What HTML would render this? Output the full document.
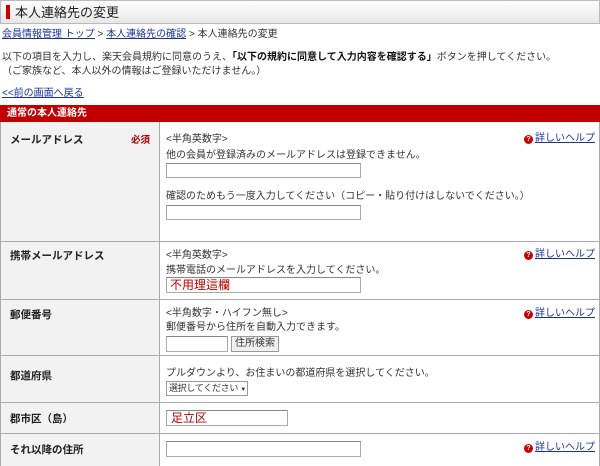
<!DOCTYPE html>
<html><head><meta charset="utf-8"><style>
*{margin:0;padding:0;box-sizing:border-box}
body{width:600px;height:466px;overflow:hidden;background:#fff;font-family:"Liberation Sans","Noto Sans CJK JP",sans-serif;font-size:10px;color:#333;position:relative}
.a{position:absolute;white-space:nowrap;line-height:12px}
a,.lk{color:#1a3399;text-decoration:underline}
.hdr{left:0;top:0;width:600px;height:24px;background:linear-gradient(#fdfdfd,#e8e8e8);border:1px solid #bbb}
.bar{left:6px;top:5px;width:4px;height:14px;background:#c00}
.red{left:0;top:105px;width:600px;height:17px;background:#bf0000;color:#fff;font-weight:bold;font-size:10px;padding:3px 0 0 7px}
.lc{left:0;width:160px;background:#f2f2f2;border-right:1px solid #aaa}
.hl{position:absolute;left:0;width:600px;height:1px;background:#aaa}
.lab{font-weight:bold;font-size:10.5px;color:#222}
.in{position:absolute;background:#fff;border:1px solid #aaa;border-top-color:#888}
.help{left:524px}
.q{display:inline-block;width:9px;height:9px;border-radius:50%;background:#c00;color:#fff;font-size:7px;font-weight:bold;text-align:center;line-height:9px;margin-right:2px;vertical-align:0px}
</style></head><body>
<div class="a hdr"></div><div class="a bar"></div>
<div class="a" style="left:15px;top:5px;font-size:13px;line-height:15px;color:#222">本人連絡先の変更</div>
<div class="a" style="left:2px;top:29px"><a>会員情報管理 トップ</a> &gt; <a>本人連絡先の確認</a> &gt; 本人連絡先の変更</div>
<div class="a" style="left:2px;top:52px">以下の項目を入力し、楽天会員規約に同意のうえ、<b style="color:#111">「以下の規約に同意して入力内容を確認する」</b>ボタンを押してください。</div>
<div class="a" style="left:2px;top:66px">（ご家族など、本人以外の情報はご登録いただけません。）</div>
<div class="a" style="left:2px;top:88px"><a>&lt;&lt;前の画面へ戻る</a></div>
<div class="a red" style="line-height:12px">通常の本人連絡先</div>
<div class="a lc" style="top:122px;height:344px"></div>
<div style="position:absolute;left:0;top:122px;width:600px;height:344px;border-left:1px solid #aaa;border-right:1px solid #aaa"></div>
<div class="hl" style="top:241px"></div><div class="hl" style="top:299px"></div><div class="hl" style="top:355px"></div><div class="hl" style="top:402px"></div><div class="hl" style="top:433px"></div>

<div class="a lab" style="left:10px;top:134px">メールアドレス</div>
<div class="a" style="left:131px;top:135px;color:#a00;font-weight:bold;font-size:9.5px">必須</div>
<div class="a" style="left:166px;top:134px">&lt;半角英数字&gt;</div>
<div class="a" style="left:166px;top:150px">他の会員が登録済みのメールアドレスは登録できません。</div>
<div class="in" style="left:166px;top:163px;width:195px;height:15px"></div>
<div class="a" style="left:166px;top:191px">確認のためもう一度入力してください（コピー・貼り付けはしないでください。）</div>
<div class="in" style="left:166px;top:205px;width:195px;height:15px"></div>
<div class="a help" style="top:133px"><span class="q">?</span><span class="lk">詳しいヘルプ</span></div>

<div class="a lab" style="left:10px;top:250px">携帯メールアドレス</div>
<div class="a" style="left:166px;top:250px">&lt;半角英数字&gt;</div>
<div class="a" style="left:166px;top:265px">携帯電話のメールアドレスを入力してください。</div>
<div class="in" style="left:166px;top:277px;width:195px;height:16px"></div>
<div class="a" style="left:170px;top:278px;color:#b00;font-size:12px;line-height:14px">不用理這欄</div>
<div class="a help" style="top:249px"><span class="q">?</span><span class="lk">詳しいヘルプ</span></div>

<div class="a lab" style="left:10px;top:309px">郵便番号</div>
<div class="a" style="left:166px;top:308px">&lt;半角数字・ハイフン無し&gt;</div>
<div class="a" style="left:166px;top:322px">郵便番号から住所を自動入力できます。</div>
<div class="in" style="left:166px;top:336px;width:62px;height:16px"></div>
<div class="a" style="left:231px;top:336px;width:48px;height:16px;border:1px solid #999;background:#f0f0f0;text-align:center;line-height:14px">住所検索</div>
<div class="a help" style="top:308px"><span class="q">?</span><span class="lk">詳しいヘルプ</span></div>

<div class="a lab" style="left:10px;top:370px">都道府県</div>
<div class="a" style="left:166px;top:368px">プルダウンより、お住まいの都道府県を選択してください。</div>
<div class="a" style="left:166px;top:381px;width:82px;height:15px;border:1px solid #999;background:#fff;padding-left:2px;line-height:13px;font-size:9px;letter-spacing:-0.3px">選択してください <span style="font-size:6px">▼</span></div>

<div class="a lab" style="left:10px;top:413px">郡市区（島）</div>
<div class="in" style="left:166px;top:410px;width:122px;height:16px"></div>
<div class="a" style="left:171px;top:411px;color:#b00;font-size:12px;line-height:14px">足立区</div>

<div class="a lab" style="left:10px;top:444px">それ以降の住所</div>
<div class="in" style="left:166px;top:441px;width:195px;height:16px"></div>
<div class="a help" style="top:442px"><span class="q">?</span><span class="lk">詳しいヘルプ</span></div>
</body></html>
